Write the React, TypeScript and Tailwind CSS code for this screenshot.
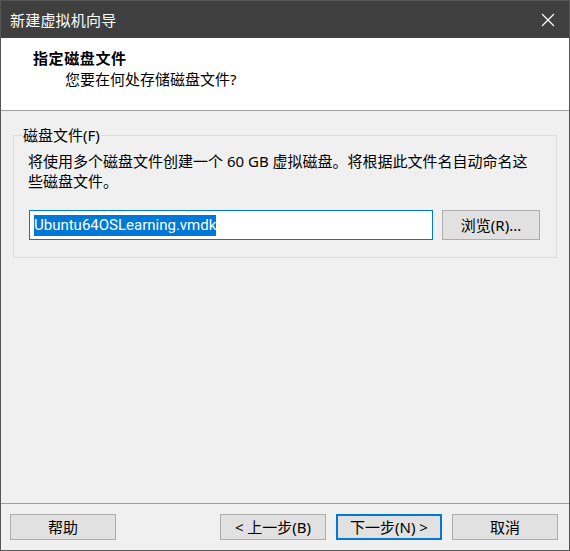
export default function App() {
  return (
    <div
      className="w-[570px] h-[551px] border border-[#555555] bg-[#f0f0f0] flex flex-col text-black text-[15px]"
      style={{ fontFamily: '"Noto Sans", "Noto Sans CJK SC", sans-serif' }}
    >
      {/* title bar */}
      <div className="h-[37px] shrink-0 bg-[#3f3f3f] flex items-center justify-between pl-[9px] pr-[12px]">
        <span className="text-white leading-[20px] tracking-[0.2px]">新建虚拟机向导</span>
        <svg width="14" height="14" viewBox="0 0 14 14" className="mr-[2px]">
          <path d="M1 1 L13 13 M13 1 L1 13" stroke="#ffffff" strokeWidth="1.2" />
        </svg>
      </div>

      {/* header */}
      <div className="h-[73px] shrink-0 bg-white border-b border-[#a0a0a0] pt-[9px]">
        <div className="pl-[32px] font-bold tracking-[0.6px] leading-[22px]">指定磁盘文件</div>
        <div className="pl-[64px] leading-[20px]">您要在何处存储磁盘文件?</div>
      </div>

      {/* body */}
      <div className="flex-1 px-[12px] pt-[14px]">
        <fieldset className="border border-[#dcdcdc] px-[14px] pt-[6px] pb-[17px]">
          <legend className="ml-[-6px] px-[1px] leading-[20px]">磁盘文件(F)</legend>
          <p className="leading-[20px]">
            将使用多个磁盘文件创建一个 60 GB 虚拟磁盘。将根据此文件名自动命名这些磁盘文件。
          </p>
          <div className="flex items-center gap-[9px] mt-[19px] ml-[1px]">
            <div className="w-[404px] h-[30px] bg-white border border-[#0078d7] flex items-center pl-[4px]">
              <span
                className="bg-[#0078d7] text-white leading-[21px]"
                style={{ fontFamily: 'Roboto, "Noto Sans", sans-serif' }}
              >
                Ubuntu64OSLearning.vmdk
              </span>
            </div>
            <button className="w-[98px] h-[30px] bg-[#e1e1e1] border border-[#adadad] leading-[20px]">
              浏览(R)...
            </button>
          </div>
        </fieldset>
      </div>

      {/* footer */}
      <div className="shrink-0 border-t border-[#a0a0a0] pt-[10px] pb-[10px] pl-[9px] pr-[11px] flex justify-between">
        <button className="w-[106px] h-[26px] bg-[#e1e1e1] border border-[#adadad] leading-[20px]">帮助</button>
        <div className="flex gap-[10px]">
          <button className="w-[106px] h-[26px] bg-[#e1e1e1] border border-[#adadad] leading-[20px]">&lt; 上一步(B)</button>
          <button className="w-[106px] h-[26px] bg-[#e1e1e1] border-2 border-[#0078d7] leading-[20px]">下一步(N) &gt;</button>
          <button className="w-[106px] h-[26px] bg-[#e1e1e1] border border-[#adadad] leading-[20px]">取消</button>
        </div>
      </div>
    </div>
  )
}
